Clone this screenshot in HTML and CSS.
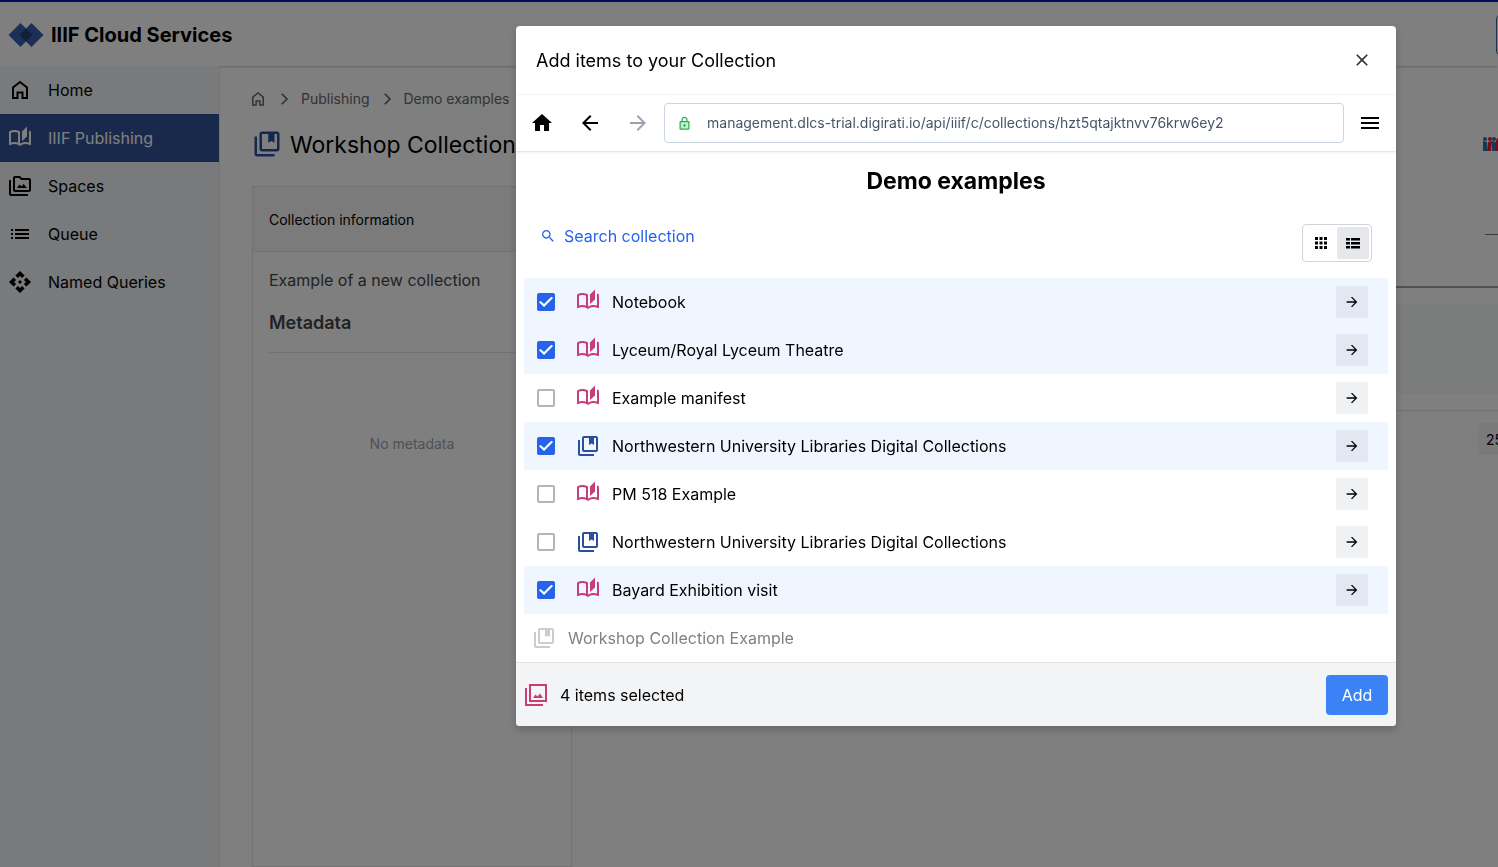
FILE: index.html
```html
<!DOCTYPE html>
<html lang="en">
<head>
    <meta charset="UTF-8">
    <meta name="viewport" content="width=device-width, initial-scale=1.0">
    <title>IIIF Cloud Services</title>
    <link rel="stylesheet" href="styles.css">
</head>
<body>
    <!-- Icon sprite -->
    <svg class="sprite" aria-hidden="true">
        <symbol id="home-outline" viewBox="0 0 24 24"><path d="M5 20V9.5L12 4l7 5.500V20h-4.500v-5.500h-5V20z" fill="none" stroke="currentColor" stroke-width="2"/></symbol>
        <symbol id="home" viewBox="0 0 24 24"><path d="M10 20v-6h4v6h5v-8h3L12 3 2 12h3v8z"/></symbol>
        <symbol id="manifest" viewBox="0 0 24 24"><path d="M22.470 5.200c-.47-.24-.96-.44-1.470-.61v12.030c-1.140-.41-2.310-.62-3.500-.62-1.900 0-3.780.54-5.500 1.580V5.480C10.380 4.550 8.510 4 6.500 4c-1.790 0-3.480.44-4.970 1.200-.33.16-.53.51-.53.88v12.080c0 .58.47.99 1 .99.16 0 .32-.04.48-.12C3.690 18.400 5.050 18 6.500 18c2.070 0 3.980.82 5.500 2 1.520-1.180 3.430-2 5.500-2 1.450 0 2.810.4 4.020 1.040.16.08.32.12.48.12.52 0 1-.41 1-.99V6.080c0-.37-.2-.72-.53-.88zM10 16.620C8.860 16.210 7.690 16 6.500 16s-2.360.21-3.500.62V6.710C4.110 6.240 5.280 6 6.500 6c1.200 0 2.390.25 3.500.72v9.900zM19 .5l-5 5V15l5-4.500V.5z"/></symbol>
        <symbol id="collection" viewBox="0 0 24 24"><path d="M4 6H2v14c0 1.100.9 2 2 2h14v-2H4V6zM20 2H8c-1.100 0-2 .9-2 2v12c0 1.100.9 2 2 2h12c1.100 0 2-.9 2-2V4c0-1.100-.9-2-2-2zm0 14H8V4h5v7l2.500-1.500L18 11V4h2v12z"/></symbol>
        <symbol id="spaces" viewBox="0 0 24 24"><path d="M3 6H1v14c0 1.100.9 2 2 2h17v-2H3V6zM21 4h-7l-2-2H7c-1.100 0-2 .9-2 2v12c0 1.100.9 2 2 2h14c1.100 0 2-.9 2-2V6c0-1.100-.9-2-2-2zm0 12H7V4h4.170l2 2H21v10zM9 14l2.500-3.500 2 2L15.500 10l3.500 4z"/></symbol>
        <symbol id="queue" viewBox="0 0 24 24"><path d="M3 7h2v2H3zm4 0h14v2H7zM3 11h2v2H3zm4 0h14v2H7zM3 15h2v2H3zm4 0h14v2H7z"/></symbol>
        <symbol id="api" viewBox="0 0 24 24"><path d="M14 12l-2 2-2-2 2-2 2 2zm-2-6l2.120 2.120 2.500-2.500L12 1 7.380 5.620l2.500 2.500L12 6zm-6 6l2.120-2.120-2.500-2.500L1 12l4.620 4.620 2.500-2.500L6 12zm12 0l-2.120 2.120 2.500 2.500L23 12l-4.620-4.620-2.500 2.500L18 12zm-6 6l-2.120-2.120-2.500 2.500L12 23l4.620-4.620-2.500-2.500L12 18z"/></symbol>
        <symbol id="chevron" viewBox="0 0 24 24"><path d="M10 5L8.590 6.410 14.170 12l-5.580 5.590L10 19l7-7z"/></symbol>
        <symbol id="close" viewBox="0 0 24 24"><path d="M19 6.410L17.590 5 12 10.590 6.410 5 5 6.410 10.590 12 5 17.590 6.410 19 12 13.410 17.590 19 19 17.590 13.410 12z"/></symbol>
        <symbol id="arrow-back" viewBox="0 0 24 24"><path d="M20 11H7.830l5.590-5.590L12 4l-8 8 8 8 1.410-1.410L7.830 13H20v-2z"/></symbol>
        <symbol id="arrow-forward" viewBox="0 0 24 24"><path d="M4 11h12.170l-5.590-5.590L12 4l8 8-8 8-1.410-1.410L16.170 13H4v-2z"/></symbol>
        <symbol id="lock" viewBox="0 0 24 24"><path d="M5 9h14v12H5z" fill="#bbf7d0"/><path d="M18 8h-1V6c0-2.760-2.240-5-5-5S7 3.240 7 6v2H6c-1.100 0-2 .9-2 2v10c0 1.100.9 2 2 2h12c1.100 0 2-.9 2-2V10c0-1.100-.9-2-2-2zM9 6c0-1.660 1.340-3 3-3s3 1.340 3 3v2H9V6zm9 14H6V10h12v10zm-6-3c1.100 0 2-.9 2-2s-.9-2-2-2-2 .9-2 2 .9 2 2 2z"/></symbol>
        <symbol id="menu" viewBox="0 0 24 24"><path d="M3 18h18v-2H3v2zm0-5h18v-2H3v2zm0-7v2h18V6H3z"/></symbol>
        <symbol id="search" viewBox="0 0 24 24"><path d="M15.500 14h-.79l-.28-.27C15.410 12.590 16 11.110 16 9.500 16 5.910 13.090 3 9.500 3S3 5.910 3 9.500 5.910 16 9.500 16c1.610 0 3.090-.59 4.230-1.570l.27.28v.79l5 4.990L20.490 19l-4.990-5zm-6 0C7.010 14 5 11.990 5 9.500S7.010 5 9.500 5 14 7.010 14 9.500 11.990 14 9.500 14z"/></symbol>
        <symbol id="grid" viewBox="0 0 12 12"><path d="M0 0h3v3H0zM4.500 0h3v3h-3zM9 0h3v3H9zM0 4.500h3v3H0zM4.500 4.500h3v3h-3zM9 4.500h3v3H9zM0 9h3v3H0zM4.500 9h3v3h-3zM9 9h3v3H9z"/></symbol>
        <symbol id="list" viewBox="0 0 14 12"><path d="M0 1h4v2.500H0zM5 1h9v2.500H5zM0 5h4v2.500H0zM5 5h9v2.500H5zM0 9h4v2.500H0zM5 9h9v2.500H5z"/></symbol>
        <symbol id="canvases" viewBox="0 0 24 24"><path d="M1 5h2v16h16v2H1zM5 1h18v18H5zm2 2v14h14V3zM9 15l2.500-3.500 2 2L16 10.500l3 4.500z"/></symbol>
    </svg>

    <div class="app">
        <header class="topbar">
            <a class="brand" href="#">
                <svg width="36" height="26" viewBox="0 0 36 26"><path d="M12.500 1L24.500 13l-12 12L.5 13z" fill="#365fb3"/><path d="M23.500 1l12 12-12 12-12-12z" fill="#365fb3"/><path d="M18 6.500l6.500 6.500-6.500 6.500-6.500-6.500z" fill="#243f6b"/></svg>
                IIIF Cloud Services
            </a>
            <button class="account" aria-label="Account"></button>
        </header>

        <div class="layout">
            <nav class="sidebar">
                <a href="#"><svg><use href="#home-outline"/></svg>Home</a>
                <a class="active" href="#"><svg><use href="#manifest"/></svg>IIIF Publishing</a>
                <a href="#"><svg><use href="#spaces"/></svg>Spaces</a>
                <a href="#"><svg><use href="#queue"/></svg>Queue</a>
                <a href="#"><svg><use href="#api"/></svg>Named Queries</a>
            </nav>

            <main class="main">
                <nav class="breadcrumbs">
                    <a href="#" aria-label="Home"><svg><use href="#home-outline"/></svg></a>
                    <svg class="chevron"><use href="#chevron"/></svg>
                    <a href="#">Publishing</a>
                    <svg class="chevron"><use href="#chevron"/></svg>
                    <a href="#">Demo examples</a>
                </nav>
                <div class="heading">
                    <svg class="collection-icon"><use href="#collection"/></svg>
                    <h1>Workshop Collection</h1>
                    <a class="iiif" href="#" aria-label="IIIF">
                        <svg width="20" height="14" viewBox="0 0 20 14"><path d="M0 4l4 1v9H0zM9 4l4 1v9H9z" fill="#2873ab"/><path d="M5 5l4-1-1 10H4zM13 14V4q0-4 6-4v4l-2 1v9z" fill="#ed1d33"/><circle cx="2" cy="2" r="2" fill="#2873ab"/><circle cx="7" cy="2" r="2" fill="#ed1d33"/><circle cx="11" cy="2" r="2" fill="#2873ab"/></svg>
                    </a>
                </div>

                <div class="columns">
                    <section class="info">
                        <h2>Collection information</h2>
                        <div class="info-body">
                            <p>Example of a new collection</p>
                            <h3>Metadata</h3>
                            <p class="empty">No metadata</p>
                        </div>
                    </section>
                    <section class="contents">
                        <div class="contents-tools"></div>
                        <div class="contents-head"></div>
                        <div class="contents-row"></div>
                        <div class="paging"><button>25</button></div>
                    </section>
                </div>
            </main>
        </div>
    </div>

    <!-- Add items dialog -->
    <div class="overlay">
        <div class="modal" role="dialog" aria-labelledby="modal-title">
            <div class="modal-header">
                <h2 id="modal-title">Add items to your Collection</h2>
                <button class="close" aria-label="Close"><svg><use href="#close"/></svg></button>
            </div>

            <div class="browser-bar">
                <button aria-label="Home"><svg><use href="#home"/></svg></button>
                <button aria-label="Back"><svg><use href="#arrow-back"/></svg></button>
                <button aria-label="Forward" disabled><svg><use href="#arrow-forward"/></svg></button>
                <div class="address">
                    <svg><use href="#lock"/></svg>
                    <input type="text" aria-label="Address" value="management.dlcs-trial.digirati.io/api/iiif/c/collections/hzt5qtajktnvv76krw6ey2">
                </div>
                <button aria-label="Menu"><svg><use href="#menu"/></svg></button>
            </div>

            <div class="modal-body">
                <h2>Demo examples</h2>
                <div class="tools">
                    <button class="search"><svg><use href="#search"/></svg>Search collection</button>
                    <div class="view-switch">
                        <button aria-label="Grid view"><svg width="12" height="12"><use href="#grid"/></svg></button>
                        <button class="on" aria-label="List view"><svg width="14" height="12"><use href="#list"/></svg></button>
                    </div>
                </div>

                <ul class="items">
                    <li class="selected">
                        <input type="checkbox" id="item1" checked>
                        <label for="item1"><svg class="manifest-icon"><use href="#manifest"/></svg>Notebook</label>
                        <button aria-label="Open"><svg><use href="#arrow-forward"/></svg></button>
                    </li>
                    <li class="selected">
                        <input type="checkbox" id="item2" checked>
                        <label for="item2"><svg class="manifest-icon"><use href="#manifest"/></svg>Lyceum/Royal Lyceum Theatre</label>
                        <button aria-label="Open"><svg><use href="#arrow-forward"/></svg></button>
                    </li>
                    <li>
                        <input type="checkbox" id="item3">
                        <label for="item3"><svg class="manifest-icon"><use href="#manifest"/></svg>Example manifest</label>
                        <button aria-label="Open"><svg><use href="#arrow-forward"/></svg></button>
                    </li>
                    <li class="selected">
                        <input type="checkbox" id="item4" checked>
                        <label for="item4"><svg class="collection-icon"><use href="#collection"/></svg>Northwestern University Libraries Digital Collections</label>
                        <button aria-label="Open"><svg><use href="#arrow-forward"/></svg></button>
                    </li>
                    <li>
                        <input type="checkbox" id="item5">
                        <label for="item5"><svg class="manifest-icon"><use href="#manifest"/></svg>PM 518 Example</label>
                        <button aria-label="Open"><svg><use href="#arrow-forward"/></svg></button>
                    </li>
                    <li>
                        <input type="checkbox" id="item6">
                        <label for="item6"><svg class="collection-icon"><use href="#collection"/></svg>Northwestern University Libraries Digital Collections</label>
                        <button aria-label="Open"><svg><use href="#arrow-forward"/></svg></button>
                    </li>
                    <li class="selected">
                        <input type="checkbox" id="item7" checked>
                        <label for="item7"><svg class="manifest-icon"><use href="#manifest"/></svg>Bayard Exhibition visit</label>
                        <button aria-label="Open"><svg><use href="#arrow-forward"/></svg></button>
                    </li>
                    <li class="unavailable"><svg><use href="#collection"/></svg>Workshop Collection Example</li>
                </ul>
            </div>

            <div class="modal-footer">
                <svg><use href="#canvases"/></svg>
                <span>4 items selected</span>
                <button class="add">Add</button>
            </div>
        </div>
    </div>
</body>
</html>
```
FILE: styles.css
```css
* {
    box-sizing: border-box;
}
body {
    margin: 0;
    font-family: Inter, "Liberation Sans", sans-serif;
    font-size: 16px;
    line-height: 24px;
    color: #000;
}
h1, h2, h3, p, ul {
    margin: 0;
    padding: 0;
    font-weight: 400;
}
a {
    color: inherit;
    text-decoration: none;
}
button {
    padding: 0;
    border: none;
    background: none;
    font: inherit;
    color: inherit;
    cursor: pointer;
}
svg {
    flex-shrink: 0;
    fill: currentColor;
}
.sprite {
    position: absolute;
    width: 0;
    height: 0;
}
.manifest-icon {
    margin-bottom: 2px;
    color: #c83c78;
}
.collection-icon {
    color: #2b4f9e;
}

/* Page */
.app {
    display: flex;
    flex-direction: column;
    height: 100vh;
    overflow: hidden;
    border-top: 2px solid #0a16b8;
}
.topbar {
    display: flex;
    align-items: center;
    justify-content: space-between;
    height: 64px;
    padding: 2px 0 0 8px;
    flex-shrink: 0;
    box-shadow: 0 1px 2px rgba(0, 0, 0, 0.2);
}
.brand {
    display: flex;
    align-items: center;
    gap: 7px;
    font-size: 20px;
    font-weight: 700;
}
.account {
    width: 40px;
    height: 40px;
    margin-right: -38px;
    border: 1px solid #365fb3;
    border-radius: 4px;
}
.layout {
    display: flex;
    flex: 1;
}
.sidebar {
    width: 220px;
    flex-shrink: 0;
    background-color: #f3f4f6;
    border-right: 1px solid #e5e7eb;
}
.sidebar a {
    display: flex;
    align-items: center;
    gap: 16px;
    height: 48px;
    padding-left: 8px;
}
.sidebar svg {
    width: 24px;
    height: 24px;
}
.sidebar .active {
    background-color: #325399;
    color: #fff;
}
.main {
    display: flex;
    flex-direction: column;
    flex: 1;
    min-width: 0;
    padding: 21px 0 0 32px;
}
.breadcrumbs {
    display: flex;
    align-items: center;
    gap: 7px;
    height: 24px;
    margin-left: -3px;
    font-size: 14px;
    color: #666;
}
.breadcrumbs svg {
    display: block;
    width: 18px;
    height: 18px;
}
.breadcrumbs .chevron {
    width: 20px;
    height: 20px;
}
.heading {
    display: flex;
    align-items: center;
    gap: 8px;
    height: 48px;
    margin-top: 9px;
}
.heading h1 {
    padding-top: 2px;
    font-size: 23px;
}
.heading .collection-icon {
    width: 30px;
    height: 30px;
}
.iiif {
    display: flex;
    margin-left: auto;
    margin-right: -5px;
}
.columns {
    display: flex;
    gap: 32px;
    flex: 1;
    margin-top: 18px;
}
.info {
    width: 320px;
    flex-shrink: 0;
    border: 1px solid #e5e5e5;
}
.info h2 {
    padding: 21px 16px 19px;
    font-size: 14px;
    background-color: #f7f7f7;
    border-bottom: 1px solid #e5e5e5;
}
.info-body {
    padding: 16px;
    color: #444;
}
.info h3 {
    padding: 19px 0 17px;
    border-bottom: 1px solid #e5e5e5;
    font-size: 18px;
    font-weight: 600;
}
.info .empty {
    padding-top: 79px;
    font-size: 14px;
    text-align: center;
    color: #9ca3af;
}
.contents {
    flex: 1;
}
.contents-tools {
    width: 13px;
    height: 49px;
    margin-left: auto;
    border-bottom: 1px solid #777;
}
.contents-head {
    height: 53px;
    border-bottom: 2px solid #9ca3af;
}
.contents-row {
    height: 90px;
    margin: 16px 0;
    background-color: #f5faf7;
}
.paging {
    display: flex;
    justify-content: flex-end;
    padding-top: 12px;
    border-top: 1px solid #e5e5e5;
}
.paging button {
    width: 40px;
    height: 32px;
    margin-right: -20px;
    padding: 2px 0 0 8px;
    border-radius: 4px;
    background-color: #f3f4f6;
    font-size: 14px;
    text-align: left;
}

/* Dialog */
.overlay {
    position: fixed;
    inset: 0;
    display: flex;
    justify-content: flex-end;
    align-items: flex-start;
    padding: 26px 102px 0 16px;
    background-color: rgba(0, 0, 0, 0.5);
}
.modal {
    width: 100%;
    max-width: 880px;
    overflow: hidden;
    border-radius: 4px;
    background-color: #fff;
    box-shadow: 0 4px 10px rgba(0, 0, 0, 0.2);
}
.modal-header {
    display: flex;
    align-items: center;
    justify-content: space-between;
    height: 69px;
    padding: 0 24px 0 20px;
    border-bottom: 1px solid #f3f4f6;
}
.modal-header h2 {
    padding-top: 2px;
    font-size: 18px;
}
.close svg {
    display: block;
    width: 20px;
    height: 20px;
    color: #333;
}
.browser-bar {
    display: flex;
    align-items: center;
    gap: 8px;
    height: 57px;
    padding: 0 6px;
    border-bottom: 1px solid #e5e7eb;
    box-shadow: 0 1px 2px rgba(0, 0, 0, 0.06);
}
.browser-bar button {
    display: flex;
    align-items: center;
    justify-content: center;
    width: 40px;
    height: 40px;
}
.browser-bar button:disabled {
    color: #9ca3af;
}
.browser-bar button svg {
    width: 24px;
    height: 24px;
}
.address {
    display: flex;
    align-items: center;
    gap: 15px;
    flex: 1;
    height: 40px;
    margin: 0 -2px;
    padding-left: 12px;
    border: 1px solid #cbd5e1;
    border-radius: 4px;
}
.address svg {
    width: 15px;
    height: 15px;
    color: #34a853;
}
.address input {
    flex: 1;
    padding: 0;
    border: none;
    outline: none;
    font: inherit;
    font-size: 14px;
    color: #475569;
}
.modal-body > h2 {
    padding-top: 13px;
    font-size: 23px;
    line-height: 32px;
    font-weight: 700;
    text-align: center;
}
.tools {
    display: flex;
    justify-content: space-between;
    padding: 27px 24px 16px;
}
.search {
    display: flex;
    align-items: center;
    gap: 8px;
    height: 24px;
    color: #2563eb;
}
.search svg {
    width: 16px;
    height: 16px;
}
.view-switch {
    display: flex;
    height: 38px;
    padding: 2px;
    border: 1px solid #d1d5db;
    border-radius: 4px;
}
.view-switch button {
    display: flex;
    align-items: center;
    justify-content: center;
    width: 32px;
    height: 32px;
    border-radius: 2px;
}
.view-switch .on {
    background-color: #e5e7eb;
}
.items {
    padding: 0 8px;
    list-style: none;
}
.items li {
    display: flex;
    align-items: center;
    height: 48px;
    padding: 0 20px 0 13px;
}
.items .selected {
    background-color: #eff6ff;
}
.items input {
    display: flex;
    align-items: center;
    justify-content: center;
    appearance: none;
    width: 18px;
    height: 18px;
    margin: 0;
    border: 2px solid #b0b5bd;
    border-radius: 2px;
    background-color: #fff;
}
.items input:checked {
    border-color: #2563eb;
    background-color: #2563eb;
}
.items input:checked::after {
    content: "";
    width: 14px;
    height: 11px;
    flex-shrink: 0;
    background-color: #fff;
    clip-path: polygon(0 53%, 11% 40%, 36% 68%, 90% 0, 100% 13%, 36% 96%);
}
.items label {
    display: flex;
    align-items: center;
    gap: 12px;
    flex: 1;
    margin-left: 21px;
}
.items label svg {
    width: 24px;
    height: 24px;
}
.items button {
    display: flex;
    align-items: center;
    justify-content: center;
    width: 32px;
    height: 32px;
    background-color: #f0f1f2;
}
.items .selected button {
    background-color: #e2e8f2;
}
.items button svg {
    width: 16px;
    height: 16px;
}
.items .unavailable {
    gap: 12px;
    padding-left: 8px;
    color: #808080;
}
.unavailable svg {
    width: 24px;
    height: 24px;
    color: #ccc;
}
.modal-footer {
    display: flex;
    align-items: center;
    gap: 12px;
    height: 64px;
    padding: 0 8px;
    border-top: 1px solid #e0e2e6;
    background-color: #f3f4f6;
}
.modal-footer svg {
    width: 24px;
    height: 24px;
    color: #c83c78;
}
.add {
    width: 62px;
    height: 40px;
    margin-left: auto;
    border-radius: 4px;
    background-color: #3b82f6;
    color: #fff;
}
```
